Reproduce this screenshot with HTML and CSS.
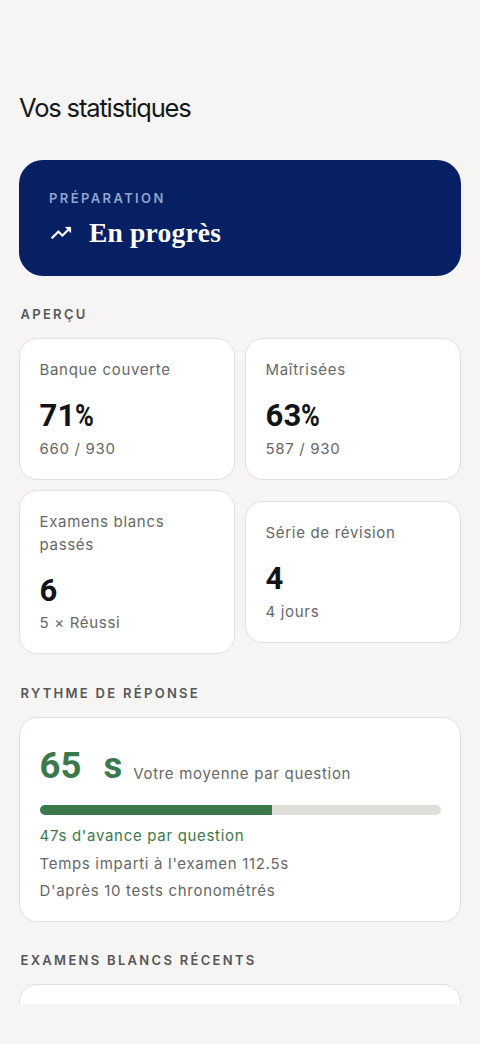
FILE: index.html
```html
<!DOCTYPE html>
<html lang="fr">
<head>
<meta charset="utf-8">
<title>Vos statistiques</title>
<link rel="stylesheet" href="styles.css">
</head>
<body>
<main class="screen">
  <h1 class="title">Vos statistiques</h1>
  <section class="hero">
    <div class="hero-label">PRÉPARATION</div>
    <div class="hero-row">
      <svg class="trend" viewBox="0 0 24 24" aria-hidden="true"><path fill="currentColor" stroke="currentColor" stroke-width="0.2" d="M16 6l2.29 2.29-4.88 4.88-4-4L2 16.59 3.41 18l6-6 4 4 6.3-6.29L22 12V6z"/></svg>
      <span class="hero-value">En progrès</span>
    </div>
  </section>

  <h2 class="heading">APERÇU</h2>
  <section class="grid">
    <article class="card">
      <div class="text">Banque couverte</div>
      <div class="value">71<span class="pct">%</span></div>
      <div class="text">660 / 930</div>
    </article>
    <article class="card">
      <div class="text">Maîtrisées</div>
      <div class="value">63<span class="pct">%</span></div>
      <div class="text">587 / 930</div>
    </article>
    <article class="card">
      <div class="text">Examens blancs passés</div>
      <div class="value">6</div>
      <div class="text">5 × Réussi</div>
    </article>
    <article class="card">
      <div class="text">Série de révision</div>
      <div class="value">4</div>
      <div class="text">4 jours</div>
    </article>
  </section>

  <h2 class="heading">RYTHME DE RÉPONSE</h2>
  <section class="card pace">
    <div class="pace-row">
      <span class="pace-value">65 s</span>
      <span class="text pace-caption">Votre moyenne par question</span>
    </div>
    <div class="track"><div class="fill" style="width:58%"></div></div>
    <div class="text ahead">47s d'avance par question</div>
    <div class="text">Temps imparti à l'examen 112.5s</div>
    <div class="text">D'après 10 tests chronométrés</div>
  </section>

  <h2 class="heading heading-last">EXAMENS BLANCS RÉCENTS</h2>
  <section class="card recent"></section>
</main>
</body>
</html>
```
FILE: styles.css
```css
* { box-sizing: border-box; }
body { margin: 0; background: #f6f5f3; font-family: Inter, "Liberation Sans", sans-serif; }
.screen { height: 1004px; overflow: hidden; padding: 88px 19px 0; }
.title { margin: 0 0 32px; font-size: 25.5px; line-height: 40px; font-weight: 370; letter-spacing: -1.15px; color: #15171a; }
.hero { height: 116px; padding: 28px 30px; border-radius: 24px; background: #071f63; color: #fff; }
.hero-label { font-size: 13px; line-height: 20px; font-weight: 600; letter-spacing: 2.4px; color: #8fa6cb; }
.hero-row { display: flex; align-items: center; gap: 16px; height: 49px; }
.trend { width: 24px; height: 24px; }
.hero-value { font-family: "Liberation Serif", serif; font-weight: 700; font-size: 27.5px; line-height: 36px; letter-spacing: 0.2px; }
.heading { margin: 0; padding: 28.4px 1.5px 14px; font-size: 13px; line-height: 20px; font-weight: 600; letter-spacing: 2.3px; color: #55575b; }
.heading-last { padding-top: 28.6px; padding-bottom: 13.8px; }
.grid { display: grid; grid-template-columns: 1fr 1fr; gap: 10px; align-items: center; }
.card { padding: 19.8px 19.5px 18.2px; border: 1px solid #e2e0da; border-radius: 18px; background: #fff; }
.text { font-size: 15px; line-height: 22.8px; font-weight: 400; letter-spacing: 0.69px; color: #64676b; }
.value { padding-top: 11.4px; height: 56px; font-family: Roboto, sans-serif; font-weight: 700; font-size: 31px; line-height: 46px; letter-spacing: 0.2px; color: #121417; }
.pct { display: inline-block; transform: scaleX(0.82); transform-origin: left; }
.pace { height: 205px; padding-top: 19px; }
.pace-row { display: flex; align-items: baseline; gap: 11px; height: 68px; }
.pace-value { font-family: Roboto, sans-serif; font-weight: 700; font-size: 36.5px; line-height: 58px; letter-spacing: 0; word-spacing: 13px; color: #3b794c; }
.pace-caption { position: relative; top: 1px; }
.track { height: 10px; border-radius: 5px; background: #dfdfd9; overflow: hidden; margin-bottom: 10.3px; }
.fill { height: 100%; background: #3b794c; }
.pace > .text { height: 27.5px; }
.pace > .ahead { color: #3b794c; }
.recent { height: 100px; }
```
